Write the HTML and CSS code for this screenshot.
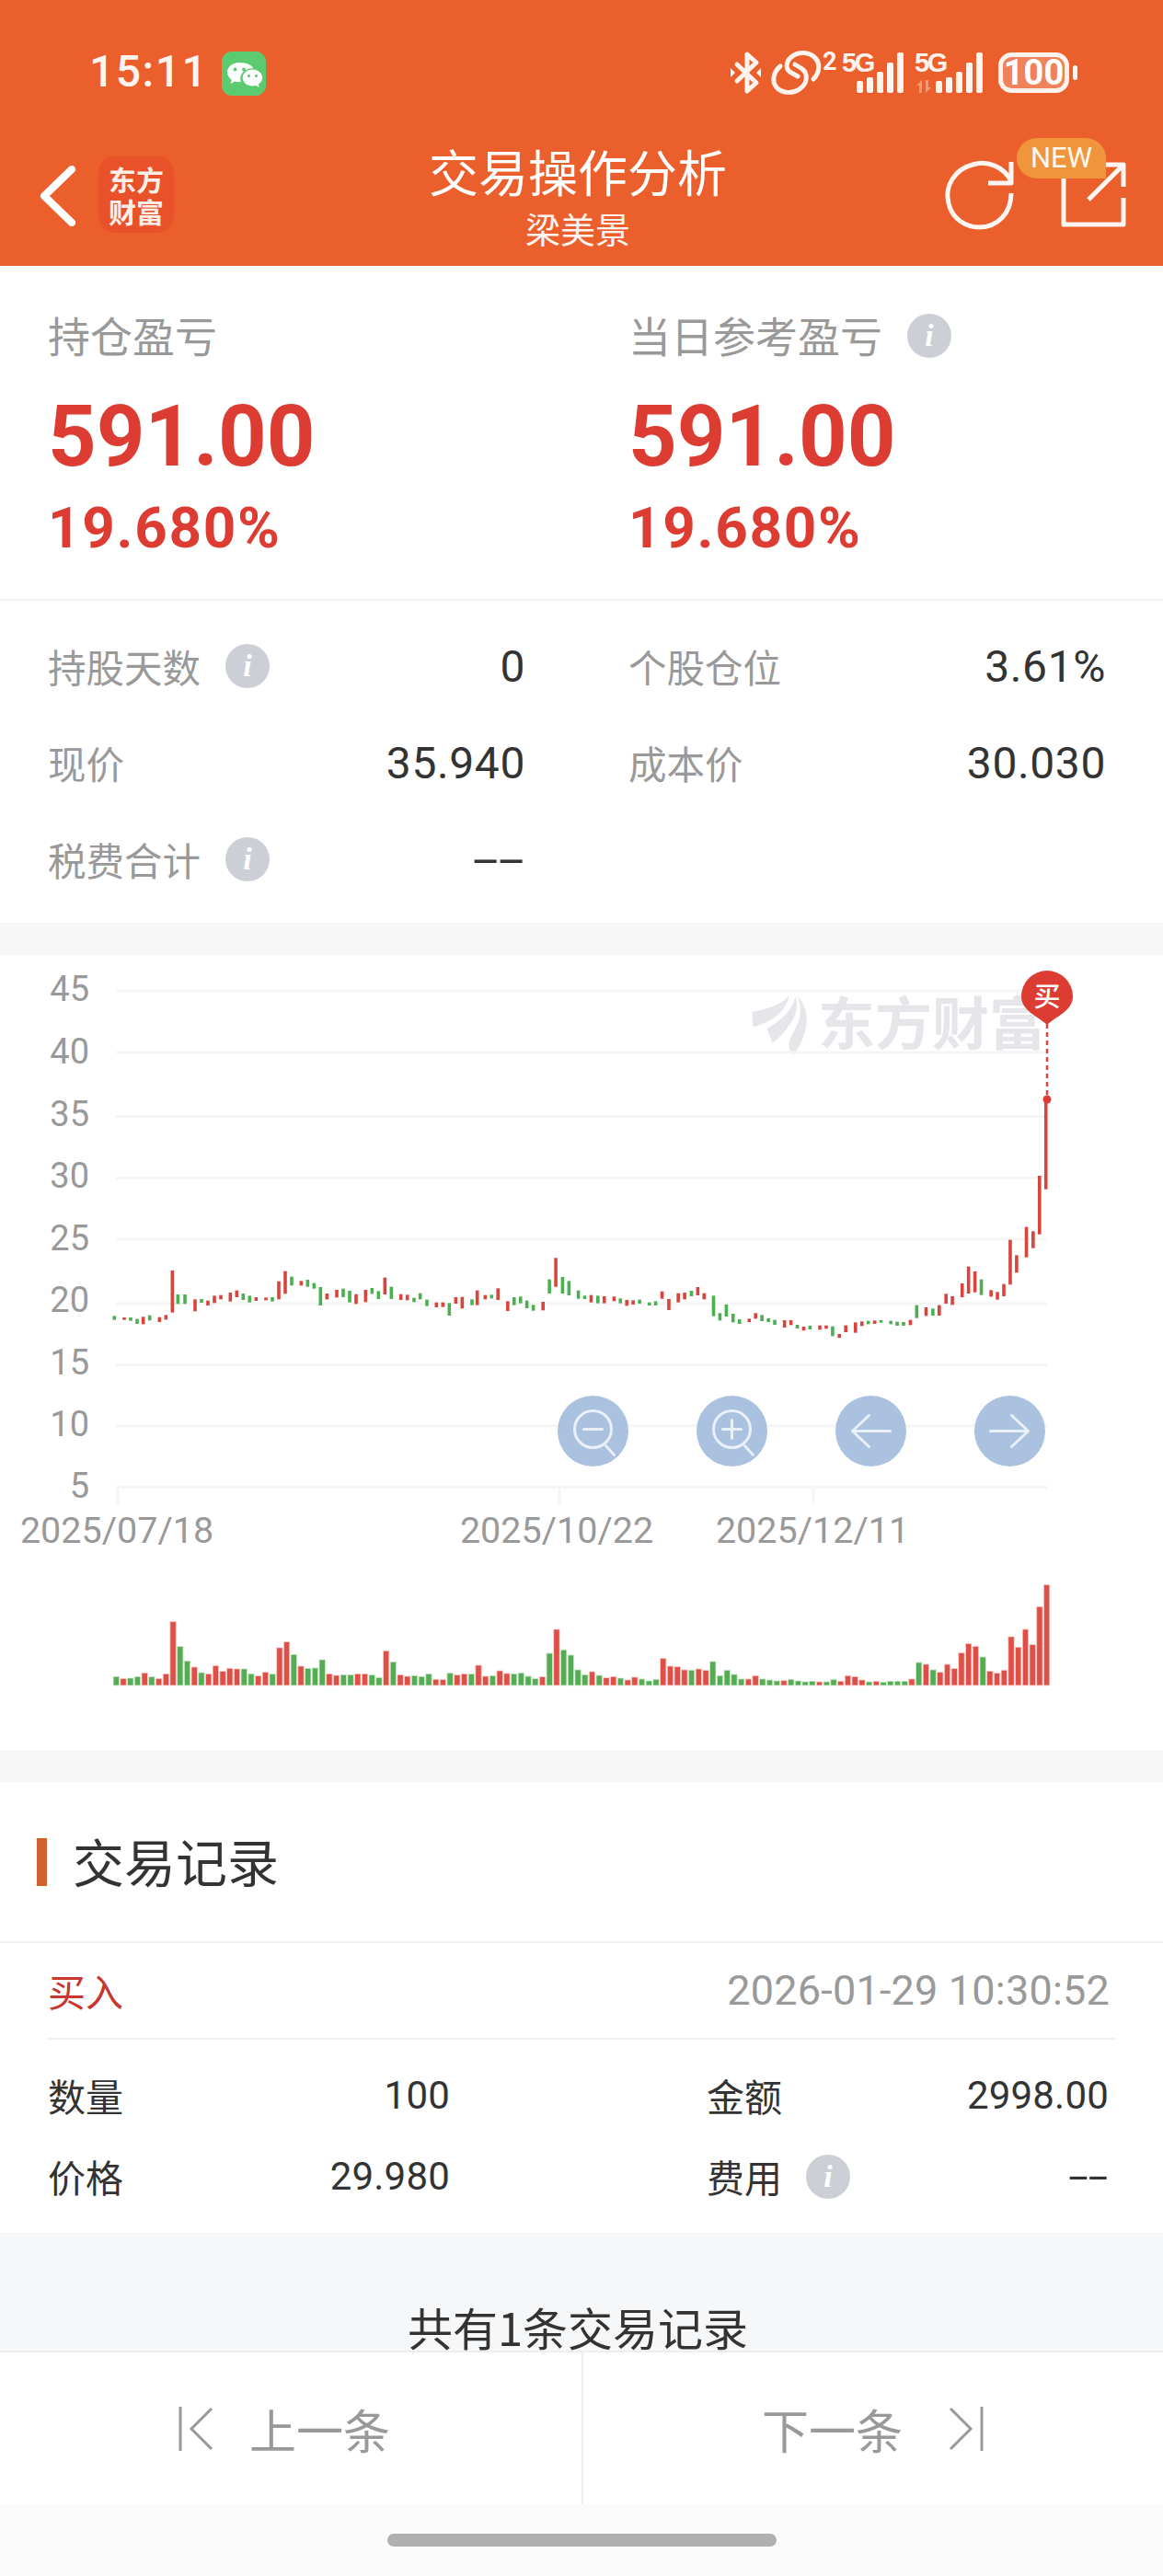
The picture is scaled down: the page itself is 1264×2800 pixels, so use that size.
FILE: index.html
```html
<!DOCTYPE html>
<html lang="zh-CN">
<head>
<meta charset="utf-8">
<title>交易操作分析</title>
<link rel="stylesheet" href="styles.css">
</head>
<body>
<div class="page">
  <header class="head">
    <div class="status">
      <span class="time">15:11</span>
      <span class="wechat">
        <svg viewBox="0 0 48 48" width="48" height="48">
          <path class="wc-a" d="M19 12c-7.200 0-13 4.700-13 10.500 0 3.300 1.900 6.200 4.800 8.100L9.500 35l4.700-2.400c1.500.4 3.100.6 4.800.6.600 0 1.200 0 1.800-.1-.4-1.100-.6-2.300-.6-3.500 0-6.300 5.800-11.400 13-11.400h1C33 14.800 26.600 12 19 12z"/>
          <circle class="wc-d" cx="14.500" cy="19.500" r="1.900"/><circle class="wc-d" cx="24" cy="19.500" r="1.900"/>
          <path class="wc-a" d="M33.500 19.500c-6 0-10.800 4-10.800 9s4.800 9 10.800 9c1.300 0 2.500-.2 3.600-.5l3.700 2-1-3.400c2.700-1.700 4.400-4.200 4.400-7.100 0-5-4.800-9-10.700-9z"/>
          <circle class="wc-d" cx="29.500" cy="26.500" r="1.600"/><circle class="wc-d" cx="37.500" cy="26.500" r="1.600"/>
        </svg>
      </span>
      <svg class="status-icons" viewBox="790 40 382 65" width="382" height="65">
        <path class="si-line" d="M800 70l21 20-10 9V59l10 9-21 20"/>
        <path class="si-fill" d="M793 74l5 5-5 5zM826 74l-5 5 5 5z"/>
        <path class="si-line" d="M883 86C890 79 891 68 884 62 877 56 866 56 859 62 852 68 853 76 859 79L866 83"/>
        <path class="si-line" d="M847 72C840 78 837 88 843 95 849 102 862 102 869 96 877 90 877 80 871 75L863 70"/>
        <text class="si-sup" x="893" y="76">2</text>
        <text class="si-5g" x="914" y="78">5G</text>
        <g class="si-bars">
          <rect x="930" y="88" width="7" height="13" rx="2"/><rect x="941" y="84" width="7" height="17" rx="2"/><rect x="952" y="78" width="7" height="23" rx="2"/><rect x="963" y="68" width="7" height="33" rx="2"/><rect x="974" y="57" width="7" height="44" rx="2"/>
        </g>
        <text class="si-5g" x="993" y="78">5G</text>
        <path class="si-arrows" d="M1001 87v14h-3v-8l-3 0zM1005 87h3v8l3 0-6 6z"/>
        <g class="si-bars">
          <rect x="1016" y="88" width="7" height="13" rx="2"/><rect x="1027" y="84" width="7" height="17" rx="2"/><rect x="1038" y="78" width="7" height="23" rx="2"/><rect x="1049" y="68" width="7" height="33" rx="2"/><rect x="1060" y="57" width="7" height="44" rx="2"/>
        </g>
        <rect class="si-batt" x="1086.500" y="59.500" width="72" height="39" rx="12"/>
        <text class="si-100" x="1122.500" y="92">100</text>
        <rect class="si-nub" x="1165" y="71" width="5" height="16" rx="2.500"/>
      </svg>
    </div>
    <nav class="nav">
      <div class="nav-left">
        <svg class="back" viewBox="0 0 42 66" width="42" height="66"><path d="M36 4L6 33l30 29"/></svg>
        <div class="logo"><span>东方</span><span>财富</span></div>
      </div>
      <div class="nav-title">
        <div class="title">交易操作分析</div>
        <div class="subtitle">梁美景</div>
      </div>
      <div class="nav-right">
        <svg class="refresh" viewBox="1024 172 80 78" width="80" height="78">
          <path d="M1099 197c-8-16-26-23-42-18-19 5-31 23-26 42 4 18 20 26 33 26 20 0 35-15 35-37"/>
          <path d="M1099 176v23h-25"/>
        </svg>
        <div class="share">
          <svg viewBox="1150 175 77 75" width="77" height="75">
            <path d="M1156 190v54h65v-29"/>
            <path d="M1183 217l37-37M1194 179h27v24"/>
          </svg>
          <span class="badge">NEW</span>
        </div>
      </div>
    </nav>
  </header>

  <section class="summary">
    <div class="sum-col">
      <div class="sum-label">持仓盈亏</div>
      <div class="sum-big">591.00</div>
      <div class="sum-pct">19.680%</div>
    </div>
    <div class="sum-col">
      <div class="sum-label">当日参考盈亏<span class="info info-top"><i>i</i></span></div>
      <div class="sum-big">591.00</div>
      <div class="sum-pct">19.680%</div>
    </div>
  </section>

  <section class="stats">
    <div class="stat"><span class="lab">持股天数<span class="info"><i>i</i></span></span><span class="val">0</span></div>
    <div class="stat"><span class="lab">个股仓位</span><span class="val">3.61%</span></div>
    <div class="stat"><span class="lab">现价</span><span class="val">35.940</span></div>
    <div class="stat"><span class="lab">成本价</span><span class="val">30.030</span></div>
    <div class="stat"><span class="lab">税费合计<span class="info"><i>i</i></span></span><span class="val dash">--</span></div>
  </section>

  <section class="chart">
    <svg class="chart-svg" viewBox="0 1038 1264 864" width="1264" height="864">
      <g class="mark-logo">
        <path d="M817.500 1100c16-3 33-8 40-18-2 16-19 30-39 34z"/>
        <path d="M833.500 1118c15-8 28-20 31-35 6 17-6 35-25 51z"/>
        <path d="M866.500 1082c16 18 12 43-4 65-9-12-4-17 2-29 7-13 7-23 2-36z"/>
        <text class="mark-text" x="889" y="1136">东方财富</text>
      </g>
      <g class="grid">
        <path d="M126 1077H1138M126 1144H1138M126 1213.500H1138M126 1280.500H1138M126 1347H1138M126 1417H1138M126 1483.500H1138M126 1550H1138M126 1616.500H1138"/>
        <path d="M128 1617V1635M608 1617V1635M884 1617V1635"/>
      </g>
      <g class="y-labels">
        <text x="97" y="1088">45</text><text x="97" y="1156">40</text><text x="97" y="1223.500">35</text><text x="97" y="1291">30</text><text x="97" y="1358.500">25</text><text x="97" y="1426">20</text><text x="97" y="1493.500">15</text><text x="97" y="1561">10</text><text x="97" y="1628">5</text>
      </g>
      <g class="x-labels">
        <text x="127" y="1677">2025/07/18</text><text x="605" y="1677">2025/10/22</text><text x="883" y="1677">2025/12/11</text>
      </g>
      <g id="candles"></g>
      <g id="volumes"></g>
      <path class="pin-line" d="M1138 1113V1192"/>
      <circle class="pin-dot" cx="1138" cy="1195" r="4.500"/>
      <path class="pin" d="M1138 1114c-9-9-28-15-28-31a28 28 0 0 1 56 0c0 16-19 22-28 31z"/>
      <text class="pin-text" x="1138" y="1094">买</text>
    </svg>
    <div class="controls">
      <svg class="ctl" viewBox="-38.500 -38.500 77 77" width="77" height="77"><circle cx="0" cy="-2" r="20"/><path d="M14 16l9 10M-10-2H10"/></svg>
      <svg class="ctl" viewBox="-38.500 -38.500 77 77" width="77" height="77"><circle cx="0" cy="-2" r="20"/><path d="M14 16l9 10M-10-2H10M0-12V8"/></svg>
      <svg class="ctl" viewBox="-38.500 -38.500 77 77" width="77" height="77"><path d="M21 0H-20M-2-17L-20 0-2 17"/></svg>
      <svg class="ctl" viewBox="-38.500 -38.500 77 77" width="77" height="77"><path d="M-21 0H20M2-17L20 0 2 17"/></svg>
    </div>
  </section>

  <section class="records">
    <div class="rec-title"><span class="rec-bar"></span><h2>交易记录</h2></div>
    <div class="trade">
      <div class="trade-head"><span class="buy">买入</span><span class="when">2026-01-29 10:30:52</span></div>
      <div class="trade-grid">
        <div class="cell"><span>数量</span><span class="num">100</span></div>
        <div class="cell"><span>金额</span><span class="num">2998.00</span></div>
        <div class="cell"><span>价格</span><span class="num">29.980</span></div>
        <div class="cell"><span>费用<span class="info info-fee"><i>i</i></span></span><span class="num dash-sm">--</span></div>
      </div>
    </div>
  </section>

  <section class="total"><span>共有1条交易记录</span></section>

  <footer class="pager">
    <div class="pager-btn">
      <svg class="pg-icon" viewBox="0 0 40 50" width="40" height="50"><path d="M2 1V49M36 3L14 25l22 22"/></svg>
      <span class="pg-prev">上一条</span>
    </div>
    <div class="pager-btn pager-next">
      <span class="pg-next">下一条</span>
      <svg class="pg-icon" viewBox="0 0 40 50" width="40" height="50"><path d="M4 3l22 22L4 47M38 1V49"/></svg>
    </div>
  </footer>
  <div class="home"><span class="home-bar"></span></div>
</div>
<script src="chart.js"></script>
</body>
</html>
```

FILE: styles.css
```css
* { box-sizing: border-box; }
html, body { margin: 0; padding: 0; background: #fff; }
body { font-family: Roboto, "Noto Sans CJK SC", sans-serif; color: #333; }
.page { width: 1264px; height: 2800px; overflow: hidden; display: flex; flex-direction: column; }

/* header */
.head { height: 289px; background: #eb5f2c; color: #fff; flex: none; }
.status { height: 150px; display: flex; align-items: flex-start; padding-left: 97px; position: relative; }
.time { font-size: 48px; font-weight: 500; line-height: 56px; margin-top: 50px; color: #fff5f0; letter-spacing: 1.500px; }
.wechat { width: 48px; height: 48px; border-radius: 11px; background: #5ccb70; margin: 56px 0 0 15px; display: block; }
.wechat svg { display: block; }
.wc-a { fill: #fff; }
.wc-d { fill: #5ccb70; }
.status-icons { margin: 40px 0 0 502px; flex: none; }
.si-line { fill: none; stroke: #fff3ee; stroke-width: 5; stroke-linecap: round; stroke-linejoin: round; }
.si-fill { fill: #fff3ee; }
.si-sup { font: 700 27px Roboto, sans-serif; fill: #fff3ee; }
.si-5g { font: 700 29px "Liberation Sans", Roboto, sans-serif; fill: #fff3ee; letter-spacing: -2.500px; }
.si-bars rect { fill: #fff3ee; }
.si-arrows { fill: #f59a78; }
.si-batt { fill: rgba(255,255,255,.22); stroke: #fff3ee; stroke-width: 5; }
.si-100 { font: 700 38px Roboto, sans-serif; fill: #fff; text-anchor: middle; }
.si-nub { fill: #fff3ee; }

.nav { height: 139px; display: grid; grid-template-columns: 1fr auto 1fr; padding-right: 8px; }
.nav-left { display: flex; align-items: flex-start; padding-left: 42px; }
.back { margin-top: 30px; flex: none; }
.back path { fill: none; stroke: #fff; stroke-width: 8; stroke-linecap: round; stroke-linejoin: round; }
.logo { width: 82px; height: 83px; margin: 20px 0 0 23px; border-radius: 18px; background: #e8512a; color: #fdeee6; font-family: "Noto Sans CJK SC", sans-serif; font-weight: 700; font-size: 30px; line-height: 35px; display: flex; flex-direction: column; align-items: center; justify-content: center; }
.nav-title { text-align: center; padding-top: 6px; font-family: "Noto Sans CJK SC", sans-serif; }
.title { font-size: 54px; line-height: 60px; }
.subtitle { font-size: 38px; line-height: 44px; margin-top: 10px; color: #fff5f0; }
.nav-right { display: flex; justify-content: flex-end; align-items: flex-start; padding-right: 29px; gap: 46px; }
.refresh { margin-top: 22px; flex: none; }
.refresh path, .share path { fill: none; stroke: #fff6f2; stroke-width: 5; stroke-linejoin: round; }
.share { position: relative; margin-top: 25px; width: 77px; height: 75px; }
.share svg { display: block; }
.badge { position: absolute; left: -45px; top: -25px; width: 97px; height: 44px; border-radius: 24px 24px 0 24px; background: #f0953b; color: #fff8ec; font-size: 31px; line-height: 44px; text-align: center; }

/* summary */
.summary { flex: none; display: grid; grid-template-columns: 631px 1fr; padding: 44px 0 45px 52px; border-bottom: 2px solid #f1f1f1; height: 364px; }
.sum-label { font-size: 46px; line-height: 60px; color: #999; font-family: "Noto Sans CJK SC", sans-serif; display: flex; align-items: center; }
.sum-big { font-size: 92px; font-weight: 700; line-height: 100px; margin-top: 32px; color: #dd3c33; }
.sum-pct { font-size: 62px; font-weight: 700; line-height: 70px; margin-top: 14px; color: #dd3c33; letter-spacing: 1.700px; }

.info { width: 48px; height: 48px; border-radius: 50%; background: #ccd0d6; display: inline-flex; align-items: center; justify-content: center; flex: none; }
.info i { font: italic 700 34px "Liberation Serif", serif; color: #fff; line-height: 48px; }
.info-top { margin: 3px 0 0 27px; }

/* stats */
.stats { flex: none; height: 350px; display: grid; grid-template-columns: 519px 519px; column-gap: 112px; row-gap: 45px; padding: 41px 0 0 52px; grid-auto-rows: 60px; background: #fff; }
.stat { display: flex; justify-content: space-between; align-items: center; }
.lab { display: flex; align-items: center; font-size: 41.500px; color: #999; font-family: "Noto Sans CJK SC", sans-serif; }
.lab .info { margin-left: 27px; }
.val { font-size: 48px; color: #333; letter-spacing: .6px; }
.dash { letter-spacing: 0; transform: scaleX(2.1); transform-origin: right center; margin-right: 1px; }

/* chart */
.chart { flex: none; height: 934px; border-top: 35px solid #f7f7f7; border-bottom: 35px solid #f7f7f7; position: relative; background: #fff; }
.chart-svg { display: block; }
.mark-logo path { fill: #e6e6ea; }
.mark-text { font: 700 62px "Noto Sans CJK SC", sans-serif; fill: #e6e6ea; }
.grid path { fill: none; stroke: #f5f5f5; stroke-width: 3; }
.y-labels text { font: 400 38px Roboto, sans-serif; fill: #999; text-anchor: end; }
.x-labels text { font: 400 39.500px Roboto, sans-serif; fill: #999; text-anchor: middle; }
.pin { fill: #dd3c33; }
.pin-line { stroke: #e0463e; stroke-width: 2.500; stroke-dasharray: 5 4; fill: none; }
.pin-dot { fill: #dd3c33; }
.pin-text { font: 500 29px "Noto Sans CJK SC", sans-serif; fill: #fff; text-anchor: middle; }
.controls { position: absolute; left: 606px; top: 479px; display: flex; gap: 74px; }
.ctl { display: block; border-radius: 50%; background: #aac1e0; flex: none; }
.ctl circle, .ctl path { fill: none; stroke: #eaf0f8; stroke-width: 3; stroke-linecap: round; stroke-linejoin: round; }

/* records */
.records { flex: none; height: 490px; background: #fff; }
.rec-title { height: 175px; display: flex; align-items: center; padding-left: 40px; border-bottom: 2px solid #f0f0f0; }
.rec-bar { width: 11px; height: 52px; background: #d2602c; margin-right: 28px; }
.rec-title h2 { margin: -4px 0 0; font: 400 56px/60px "Noto Sans CJK SC", sans-serif; color: #333; }
.trade { padding: 0 51px; }
.trade-head { height: 105px; display: flex; justify-content: space-between; align-items: center; padding: 0 7px 0 1px; border-bottom: 2px solid #f1f1f1; }
.buy { font: 400 41px/50px "Noto Sans CJK SC", sans-serif; color: #c8372f; margin-top: -2px; }
.when { font-size: 45px; color: #999; letter-spacing: .2px; }
.trade-grid { display: grid; grid-template-columns: 437px 437px; column-gap: 279px; grid-auto-rows: 88px; padding: 16px 0 0 1px; }
.cell { display: flex; justify-content: space-between; align-items: center; font: 400 41px Roboto, "Noto Sans CJK SC", sans-serif; color: #333; }
.cell > span:first-child { display: flex; align-items: center; }
.num { font-size: 42px; letter-spacing: .2px; }
.dash-sm { letter-spacing: 0; transform: scaleX(1.85); transform-origin: right center; margin-right: 1px; }
.info-fee { margin: 2px 0 0 26px; }

/* total */
.total { flex: none; height: 128px; background: #f6f7f9; display: flex; align-items: flex-end; justify-content: center; padding-bottom: 2px; font: 400 49px/48px "Noto Sans CJK SC", Roboto, sans-serif; color: #333; padding-right: 8px; }

/* pager */
.pager { flex: none; height: 167px; background: #fff; border-top: 2px solid #eeeeee; display: grid; grid-template-columns: 1fr 1fr; }
.pager-btn { display: flex; align-items: center; gap: 37px; padding-left: 194px; }
.pager-next { border-left: 2px solid #eeeeee; justify-content: flex-end; padding: 0 195px 0 0; gap: 48px; }
.pager-btn span { font: 400 51px "Noto Sans CJK SC", sans-serif; color: #999; }
.pg-icon { flex: none; }
.pg-icon path { fill: none; stroke: #999; stroke-width: 3; }
.home { flex: 1; background: #fbfbfb; padding-top: 32px; display: flex; justify-content: center; align-items: flex-start; }
.home-bar { width: 423px; height: 14px; border-radius: 7px; background: #b0b0b0; }
```

FILE: chart.js
```js
// Daily candles and volumes, read off the chart as [x, top, bottom, up?]
var first = [[373,331,344,0],[405,336,344,1],[426,336,347,0],[447,341,357,0],[467,334,358,1],[488,329,346,0],[520,335,351,1],[541,328,343,1],[562,183,320,1],[580,261,292,0],[603,261,292,0],[636,277,316,1],[657,276,288,0],[678,281,297,1],[699,265,289,1],[720,263,277,1],[751,255,284,1],[772,248,270,1],[793,258,279,0],[814,265,287,0],[835,270,282,1],[867,271,280,1],[888,270,284,0],[909,218,277,1],[930,185,259,1],[951,203,232,0],[982,217,232,1],[1003,213,236,0],[1024,224,242,0],[1045,237,297,0],[1066,258,277,1],[1098,246,271,1],[1119,242,270,0],[1140,249,287,0],[1161,260,292,1],[1192,246,286,1],[1213,240,259,0],[1234,250,276,0],[1255,206,261,1],[1276,236,276,0],[1307,260,279,1],[1328,262,280,1],[1350,272,286,0],[1370,257,277,0],[1392,278,299,0],[1423,287,303,1],[1444,287,302,1],[1465,289,330,0],[1486,270,291,1],[1507,269,307,1],[1539,277,296,0],[1556,248,296,1]];
var second = [[18,263,277,1],[35,262,274,0],[52,241,279,1],[78,283,315,1],[95,270,296,0],[112,268,290,0],[129,281,306,0],[146,295,314,0],[172,285,313,1],[189,212,258,0],[206,142,236,1],[224,204,258,0],[241,217,264,0],[266,248,275,0],[283,265,276,0],[300,263,287,1],[318,265,290,0],[335,267,290,1],[361,268,283,1],[378,274,290,0],[395,279,298,1],[412,280,294,1],[429,278,291,0],[455,287,297,0],[472,283,297,0],[489,251,275,1],[507,276,312,1],[532,257,287,1],[549,255,277,1],[567,249,267,0],[584,237,264,1],[601,257,277,1],[626,265,332,0],[643,322,346,0],[660,294,333,0],[678,324,352,0],[695,342,357,0],[721,340,351,1],[738,322,340,1],[755,328,348,0],[772,339,351,0],[789,344,360,0],[815,345,369,1],[832,345,361,1],[849,360,372,0],[866,366,379,1],[883,363,375,0],[909,362,376,1],[926,362,373,1],[943,365,397,0],[961,390,403,1],[978,362,384,1],[1004,352,386,1],[1021,349,364,1],[1038,347,358,0],[1055,346,357,1],[1072,345,353,0],[1098,347,358,0],[1115,350,363,0],[1132,351,363,0],[1150,344,361,1],[1167,296,338,0],[1192,303,331,1],[1210,307,330,0],[1227,296,330,1],[1245,259,291,1],[1262,267,295,1],[1288,225,270,1],[1305,170,258,1],[1322,186,254,1],[1339,212,263,0],[1365,247,268,1],[1382,253,278,1],[1399,227,267,1],[1416,83,229,1],[1433,133,190,1],[1459,41,140,1],[1477,55,110,1],[1494,-126,65,1],[1511,-366,-82,1]];
// Volume bar tops: [top, up?], one per trading day
var vols = [[427,0],[434,1],[432,0],[427,0],[415,1],[428,0],[434,1],[418,1],[248,1],[329,0],[376,0],[396,1],[414,0],[418,1],[392,1],[410,1],[400,1],[402,1],[402,0],[418,0],[425,1],[413,1],[419,0],[333,1],[314,1],[355,0],[393,1],[400,0],[399,0],[372,0],[418,1],[423,1],[421,0],[421,0],[418,1],[418,1],[422,0],[430,0],[343,1],[379,0],[421,1],[426,1],[424,0],[427,0],[418,0],[436,1],[437,1],[416,0],[422,1],[418,1],[419,0],[390,1],[426,1],[424,0],[408,1],[417,1],[418,0],[415,0],[426,0],[434,0],[428,1],[351,0],[273,1],[340,0],[357,0],[405,0],[421,0],[411,1],[423,0],[431,1],[427,1],[432,0],[438,1],[429,1],[435,0],[441,0],[436,0],[368,1],[393,1],[395,1],[405,1],[406,0],[402,1],[407,1],[378,0],[424,0],[406,0],[420,0],[435,0],[435,1],[424,1],[435,0],[438,0],[441,0],[440,1],[436,0],[441,0],[444,0],[442,0],[444,1],[444,0],[437,0],[442,1],[424,1],[427,1],[438,1],[444,0],[442,1],[445,0],[442,0],[442,0],[442,0],[435,1],[381,0],[387,1],[405,0],[413,1],[387,1],[401,1],[350,1],[320,1],[328,1],[363,0],[409,1],[416,1],[406,1],[297,1],[331,1],[273,1],[323,1],[199,1],[128,1]];

var NS = "http://www.w3.org/2000/svg";
function bar(parent, x, y, w, h, fill, stroke) {
  var r = document.createElementNS(NS, "rect");
  r.setAttribute("x", x - w / 2);
  r.setAttribute("y", y);
  r.setAttribute("width", w);
  r.setAttribute("height", h);
  r.setAttribute("fill", fill);
  if (stroke) { r.setAttribute("stroke", stroke); r.setAttribute("stroke-width", "0.8"); }
  parent.appendChild(r);
}
var candles = document.getElementById("candles");
var volumes = document.getElementById("volumes");
var UP = "#d9443c", DOWN = "#4caf50";
first.forEach(function (c) {
  bar(candles, c[0] / 3, 1320 + c[1] / 3, 3.6, (c[2] - c[1]) / 3, c[3] ? UP : DOWN);
});
second.forEach(function (c) {
  bar(candles, 520 + c[0] / 2.45, 1320 + c[1] / 3, 3.6, (c[2] - c[1]) / 3, c[3] ? UP : DOWN);
});
vols.forEach(function (v, i) {
  var top = 1680 + v[0] / 3;
  bar(volumes, 126.3 + i * 7.72, top, 6.4, 1832 - top,
      v[1] ? "#de4f47" : "#58ab55", v[1] ? "#fbd0cd" : "#cdeccd");
});
```
